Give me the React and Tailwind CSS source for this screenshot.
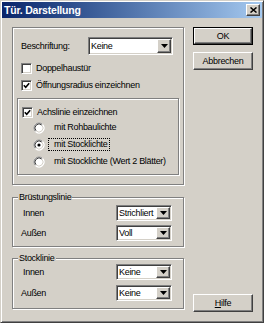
import React from "react";

const raised =
  "border border-t-white border-l-white border-r-[#404040] border-b-[#404040] shadow-[inset_-1px_-1px_0_#808080,inset_1px_1px_0_#d4d0c8]";
const sunken =
  "border border-t-[#808080] border-l-[#808080] border-r-white border-b-white shadow-[inset_1px_1px_0_#404040,inset_-1px_-1px_0_#d4d0c8]";
const etched =
  "border border-[#808080] shadow-[inset_1px_1px_0_#fff,1px_1px_0_#fff]";

function Arrow() {
  return (
    <svg width="7" height="4" viewBox="0 0 7 4">
      <polygon points="0,0 7,0 3.5,4" fill="#000" />
    </svg>
  );
}

function Combo({ value, className }) {
  return (
    <div className={`flex bg-white ${sunken} p-[1px] ${className}`}>
      <span className="flex-1 pl-[1px] flex items-center whitespace-nowrap overflow-hidden">
        {value}
      </span>
      <div className={`w-[14px] h-full bg-[#d4d0c8] ${raised} flex items-center justify-center`}>
        <Arrow />
      </div>
    </div>
  );
}

function Check({ checked, label }) {
  return (
    <div className="flex items-center h-[13px] pl-[4px]">
      <div className={`w-[11px] h-[11px] bg-white ${sunken} flex items-center justify-center`}>
        {checked && (
          <svg width="7" height="7" viewBox="0 0 7 7">
            <path d="M0.8 3.2 L2.7 5.2 L6.2 1.2" stroke="#000" strokeWidth="1.6" fill="none" />
          </svg>
        )}
      </div>
      <span className="ml-[4px] whitespace-nowrap">{label}</span>
    </div>
  );
}

function Radio({ checked, label, focus }) {
  return (
    <div className="flex items-center h-[13px] pl-[15px]">
      <svg width="12" height="12" viewBox="0 0 12 12">
        <circle cx="6" cy="6" r="5.5" fill="#fff" />
        <path d="M2.46 9.54 A5 5 0 0 1 9.54 2.46" stroke="#808080" fill="none" />
        <path d="M2.46 9.54 A5 5 0 0 0 9.54 2.46" stroke="#fff" fill="none" />
        <path d="M3.17 8.83 A4 4 0 0 1 8.83 3.17" stroke="#404040" fill="none" />
        <path d="M3.17 8.83 A4 4 0 0 0 8.83 3.17" stroke="#d4d0c8" fill="none" />
        {checked && <circle cx="6" cy="6" r="1.6" fill="#000" />}
      </svg>
      <span
        className={`ml-[3px] pl-[5px] pr-[1px] h-[13px] flex items-center whitespace-nowrap border ${
          focus ? "border-dotted border-black" : "border-transparent"
        }`}
      >
        {label}
      </span>
    </div>
  );
}

function Button({ children, def, className = "" }) {
  return (
    <div className={`w-[60px] h-[18px] ${def ? "border border-black" : ""} ${className}`}>
      <div
        className={`w-full h-full bg-[#d4d0c8] ${raised} flex items-center justify-center`}
      >
        {children}
      </div>
    </div>
  );
}

export default function App() {
  return (
    <div className="w-[264px] h-[323px] bg-[#d4d0c8] border border-t-[#d4d0c8] border-l-[#d4d0c8] border-r-[#404040] border-b-[#404040] shadow-[inset_1px_1px_0_#fff,inset_-1px_-1px_0_#808080] p-[1px] flex flex-col font-['Liberation_Sans',Arial,sans-serif] text-[9px] tracking-[-0.3px] text-black leading-none">
      {/* Title bar */}
      <div className="h-[16px] bg-gradient-to-r from-[#0a246a] to-[#a6caf0] flex items-center pl-[2px] pr-[2px]">
        <span className="text-white font-bold text-[10.5px] tracking-[-0.2px] flex-1">
          Tür. Darstellung
        </span>
        <div className={`w-[14px] h-[12px] bg-[#d4d0c8] ${raised} flex items-center justify-center`}>
          <svg width="7" height="6" viewBox="0 0 7 6">
            <path d="M0.5 0.5 L6.5 5.5 M6.5 0.5 L0.5 5.5" stroke="#000" strokeWidth="1.5" />
          </svg>
        </div>
      </div>

      {/* Body */}
      <div className="flex flex-1 pl-[10px] pt-[9px]">
        {/* Left column */}
        <div className="w-[172px] flex flex-col">
          {/* Outer group */}
          <div className={`h-[158px] ${etched} pt-[9px] px-[4px] flex flex-col`}>
            <div className="flex items-center h-[18px] pl-[4px]">
              <span className="w-[67px]">Beschriftung:</span>
              <Combo value="Keine" className="w-[85px] h-[18px]" />
            </div>
            <div className="mt-[7px]">
              <Check label="Doppelhaustür" />
            </div>
            <div className="mt-[4px]">
              <Check checked label="Öffnungsradius einzeichnen" />
            </div>
            <div className={`mt-[6px] h-[77px] ${etched} pt-[7px] flex flex-col`}>
              <Check checked label="Achslinie einzeichnen" />
              <div className="mt-[2px]">
                <Radio label="mit Rohbaulichte" />
              </div>
              <div className="mt-[4px]">
                <Radio checked focus label="mit Stocklichte" />
              </div>
              <div className="mt-[4px]">
                <Radio label="mit Stocklichte (Wert 2 Blätter)" />
              </div>
            </div>
          </div>

          {/* Brüstungslinie */}
          <div className={`relative mt-[12px] h-[50px] ${etched} pt-[7px] flex flex-col`}>
            <span className="absolute top-[-5px] left-[5px] px-[1px] bg-[#d4d0c8]">
              Brüstungslinie
            </span>
            <div className="flex items-center h-[16px] pl-[10px]">
              <span className="w-[93px]">Innen</span>
              <Combo value="Strichliert" className="w-[56px] h-[16px]" />
            </div>
            <div className="flex items-center h-[16px] pl-[8px] mt-[4px]">
              <span className="w-[95px]">Außen</span>
              <Combo value="Voll" className="w-[56px] h-[16px]" />
            </div>
          </div>

          {/* Stocklinie */}
          <div className={`relative mt-[11px] h-[51px] ${etched} pt-[5px] flex flex-col`}>
            <span className="absolute top-[-5px] left-[5px] px-[1px] bg-[#d4d0c8]">
              Stocklinie
            </span>
            <div className="flex items-center h-[16px] pl-[10px]">
              <span className="w-[93px]">Innen</span>
              <Combo value="Keine" className="w-[56px] h-[16px]" />
            </div>
            <div className="flex items-center h-[16px] pl-[8px] mt-[5px]">
              <span className="w-[95px]">Außen</span>
              <Combo value="Keine" className="w-[56px] h-[16px]" />
            </div>
          </div>
        </div>

        {/* Right column */}
        <div className="ml-[9px] flex flex-col pb-[9px]">
          <Button def>OK</Button>
          <Button className="mt-[7px]">Abbrechen</Button>
          <Button className="mt-auto">
            <span>
              <span className="underline">H</span>ilfe
            </span>
          </Button>
        </div>
      </div>
    </div>
  );
}
